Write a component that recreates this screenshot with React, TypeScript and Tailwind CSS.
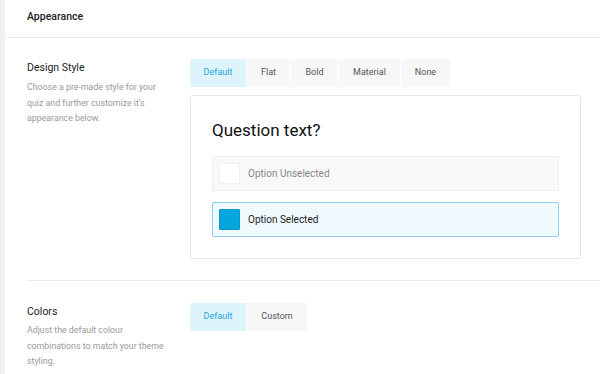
import React from "react";

const font = { fontFamily: "Roboto, 'Noto Sans', sans-serif" };

function Tabs({ items, active }: { items: { label: string; w: number }[]; active: number }) {
  return (
    <div className="flex gap-px">
      {items.map((it, i) => (
        <div
          key={it.label}
          style={{ width: it.w }}
          className={
            "h-[28px] flex items-center justify-center text-[9px] " +
            (i === active
              ? "bg-[#def4fc] text-[#1ea5da] " + (i === 0 ? "rounded-l-[3px]" : "")
              : "bg-[#f7f7f7] text-[#555] " + (i === items.length - 1 ? "rounded-r-[3px]" : ""))
          }
        >
          {it.label}
        </div>
      ))}
    </div>
  );
}

export default function App() {
  return (
    <div style={font} className="w-[600px] h-[374px] overflow-hidden bg-white flex">
      <div className="w-[5px] bg-[#f1f1f1] shrink-0" />
      <div className="flex-1 flex flex-col">
        <div className="h-[38px] border-b border-[#ececec] flex items-center pl-[22px] pb-[4px] text-[10.5px] font-medium text-[#222]">
          Appearance
        </div>
        <div className="pl-[22px]">
          <div className="flex pt-[21px] pb-[21px] border-b border-[#ececec]">
            <div className="w-[163px] shrink-0 pr-[16px]">
              <div className="text-[10.5px] text-[#222] mt-[1px] leading-[16px]">Design Style</div>
              <div className="text-[8.8px] text-[#9a9a9a] leading-[15.5px] mt-[4px] w-[145px]">
                Choose a pre-made style for your quiz and further customize it's appearance below.
              </div>
            </div>
            <div className="flex flex-col pr-[19px] flex-1">
              <Tabs
                active={0}
                items={[
                  { label: "Default", w: 56 },
                  { label: "Flat", w: 43 },
                  { label: "Bold", w: 47 },
                  { label: "Material", w: 61 },
                  { label: "None", w: 49 },
                ]}
              />
              <div className="mt-[8px] border border-[#e8e8e8] rounded-[3px] px-[21px] pt-[22px] pb-[21px]">
                <div className="text-[17px] text-[#111] leading-[24px]">Question text?</div>
                <div className="mt-[14px] h-[35px] border border-[#efefef] bg-[#f8f8f8] rounded-[2px] flex items-center pl-[6px]">
                  <div className="w-[21px] h-[21px] bg-white border border-[#f0f0f0] rounded-[1px]" />
                  <span className="ml-[8px] text-[10px] text-[#888]">Option Unselected</span>
                </div>
                <div className="mt-[11px] h-[35px] border border-[#90cdef] bg-[#f0f9fe] rounded-[2px] flex items-center pl-[6px]">
                  <div className="w-[21px] h-[21px] bg-[#05a6de] border border-[#0b98cb] rounded-[1px]" />
                  <span className="ml-[8px] text-[10px] text-[#222]">Option Selected</span>
                </div>
              </div>
            </div>
          </div>
          <div className="flex pt-[22px]">
            <div className="w-[163px] shrink-0 pr-[16px]">
              <div className="text-[10.5px] text-[#222] mt-[1px] leading-[16px]">Colors</div>
              <div className="text-[8.8px] text-[#9a9a9a] leading-[15.5px] mt-[3px] w-[145px]">
                Adjust the default colour combinations to match your theme styling.
              </div>
            </div>
            <div>
              <Tabs
                active={0}
                items={[
                  { label: "Default", w: 56 },
                  { label: "Custom", w: 60 },
                ]}
              />
            </div>
          </div>
        </div>
      </div>
    </div>
  );
}
